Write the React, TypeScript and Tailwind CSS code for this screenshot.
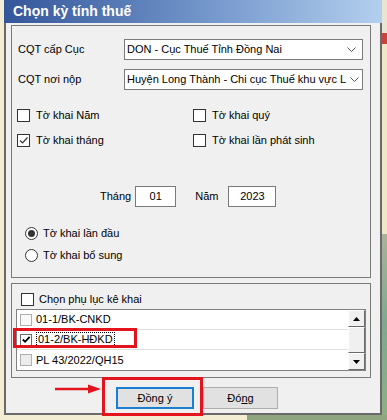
import React from 'react'

const CheckMark = ({ thick }: { thick?: boolean }) => (
  <svg width="11" height="11" viewBox="0 0 11 11">
    <polyline
      points="2,5.5 4.5,8 9.5,2.5"
      fill="none"
      stroke={thick ? '#000' : '#333'}
      strokeWidth={thick ? 2 : 1.2}
    />
  </svg>
)

const CheckBox = ({ checked }: { checked?: boolean }) => (
  <span className="w-[13px] h-[13px] border border-[#333] bg-white flex items-center justify-center shrink-0">
    {checked && <CheckMark />}
  </span>
)

const Radio = ({ checked }: { checked?: boolean }) => (
  <span className="w-[13px] h-[13px] rounded-full border border-[#333] bg-white flex items-center justify-center shrink-0">
    {checked && <span className="w-[7px] h-[7px] rounded-full bg-[#333]" />}
  </span>
)

const Combo = ({ value }: { value: string }) => (
  <div className="w-[239px] h-[21px] border border-[#7a7a7a] bg-white flex items-center pl-[2px] pr-[6px]">
    <span className="flex-1 whitespace-nowrap">{value}</span>
    <svg width="9" height="5" viewBox="0 0 9 5" className="ml-[4px] shrink-0">
      <polyline points="0.5,0.5 4.5,4.5 8.5,0.5" fill="none" stroke="#555" strokeWidth="1" />
    </svg>
  </div>
)

const ScrollButton = ({ up }: { up?: boolean }) => (
  <div className="h-[17px] bg-[#f0f0f0] border border-t-white border-l-white border-r-[#696969] border-b-[#696969] flex items-center justify-center">
    <svg width="7" height="4" viewBox="0 0 7 4">
      <polygon points={up ? '0,4 3.5,0 7,4' : '0,0 3.5,4 7,0'} fill="#000" />
    </svg>
  </div>
)

const rows = [
  { code: '01-1/BK-CNKD', checked: false, focus: false },
  { code: '01-2/BK-HĐKD', checked: true, focus: true },
  { code: 'PL 43/2022/QH15', checked: false, focus: false },
]

export default function App() {
  return (
    <div className="w-[387px] h-[420px] overflow-hidden flex flex-col bg-[#f3eed3] text-[11px] text-black font-['Liberation_Sans',Arial,sans-serif]">
      <div className="flex h-[415px]">
        <div className="w-[4px] bg-[#f3eed3]" />
        <div className="w-[378px] flex flex-col">
          <div className="h-[23px] shrink-0 flex items-center pl-[9px] bg-gradient-to-r from-[#34569a] via-[#6f92c8] to-[#b3cfee]">
            <span className="text-white font-bold text-[14px]">Chọn kỳ tính thuế</span>
          </div>
          <div className="flex-1 bg-[#f0f0f0] border-l-2 border-r-2 border-b-2 border-[#6a6a6a] flex flex-col">
            {/* group 1 */}
            <div className="mt-[2px] ml-[5px] w-[360px] h-[253px] border border-[#7a7a7a] flex flex-col pt-[13px]">
              <div className="flex items-center pl-[6px]">
                <span className="w-[106px]">CQT cấp Cục</span>
                <Combo value="DON - Cục Thuế Tỉnh Đồng Nai" />
              </div>
              <div className="flex items-center pl-[6px] mt-[9px]">
                <span className="w-[106px]">CQT nơi nộp</span>
                <Combo value="Huyện Long Thành - Chi cục Thuế khu vực L" />
              </div>

              <div className="flex items-center h-[13px] pl-[5px] mt-[19px]">
                <div className="w-[176px] flex items-center gap-[6px]">
                  <CheckBox />
                  <span>Tờ khai Năm</span>
                </div>
                <div className="flex items-center gap-[6px]">
                  <CheckBox />
                  <span>Tờ khai quý</span>
                </div>
              </div>
              <div className="flex items-center h-[13px] pl-[5px] mt-[12px]">
                <div className="w-[176px] flex items-center gap-[6px]">
                  <CheckBox checked />
                  <span>Tờ khai tháng</span>
                </div>
                <div className="flex items-center gap-[6px]">
                  <CheckBox />
                  <span>Tờ khai lần phát sinh</span>
                </div>
              </div>

              <div className="flex items-center pl-[88px] mt-[39px]">
                <span>Tháng</span>
                <div className="ml-[4px] w-[41px] h-[21px] border border-[#7a7a7a] bg-white flex items-center justify-center">
                  01
                </div>
                <span className="ml-[19px]">Năm</span>
                <div className="ml-[10px] w-[48px] h-[21px] border border-[#7a7a7a] bg-white flex items-center justify-center">
                  2023
                </div>
              </div>

              <div className="flex items-center h-[13px] pl-[13px] gap-[5px] mt-[20px]">
                <Radio checked />
                <span>Tờ khai lần đầu</span>
              </div>
              <div className="flex items-center h-[13px] pl-[13px] gap-[5px] mt-[9px]">
                <Radio />
                <span>Tờ khai bổ sung</span>
              </div>
            </div>

            {/* group 2 */}
            <div className="mt-[5px] ml-[5px] w-[360px] h-[95px] border border-[#7a7a7a] flex flex-col pt-[9px]">
              <div className="flex items-center h-[13px] pl-[9px] gap-[5px]">
                <CheckBox />
                <span>Chọn phụ lục kê khai</span>
              </div>
              <div className="relative mt-[3px] ml-[4px] w-[350px] h-[62px] border border-[#828282] bg-white flex">
                <div className="flex-1 flex flex-col">
                  {rows.map((r, i) => (
                    <div
                      key={r.code}
                      className={`h-[20px] flex items-center pl-[3px] gap-[4px] ${i < 2 ? 'border-b border-[#e0e0e0]' : ''}`}
                    >
                      <span
                        className={`w-[12px] h-[12px] border flex items-center justify-center shrink-0 ${
                          r.checked ? 'border-[#6e6e6e] bg-white' : i === 2 ? 'border-[#b0b0b0] bg-[#ececec]' : 'border-[#b0b0b0] bg-[#f8f8f8]'
                        }`}
                      >
                        {r.checked && <CheckMark thick />}
                      </span>
                      <span className={r.focus ? 'border border-dotted border-black px-[1px] leading-[13px]' : ''}>
                        {r.code}
                      </span>
                    </div>
                  ))}
                </div>
                <div className="w-[17px] flex flex-col">
                  <ScrollButton up />
                  <div className="flex-1 bg-[#f0f0f0] border border-t-white border-l-white border-r-[#696969] border-b-[#696969]" />
                  <ScrollButton />
                </div>
                <div className="absolute left-[-4px] top-[18px] w-[124px] h-[20px] border-[3px] border-[#e3141d]" />
              </div>
            </div>

            {/* buttons */}
            <div className="flex mt-[9px] pl-[110px] gap-[9px]">
              <div className="relative">
                <button className="w-[78px] h-[22px] bg-[#e1e1e1] border-2 border-[#1a7fd0] flex items-center justify-center">
                  <span>
                    Đồn<span className="underline">g</span> ý
                  </span>
                </button>
                <div className="absolute left-[-14px] top-[-10px] w-[101px] h-[39px] border-[3px] border-[#e3141d]" />
                <svg width="46" height="10" viewBox="0 0 46 10" className="absolute left-[-61px] top-[-3px]">
                  <line x1="0" y1="5" x2="36" y2="5" stroke="#e3141d" strokeWidth="2.5" />
                  <polygon points="33,0.5 46,5 33,9.5" fill="#e3141d" />
                </svg>
              </div>
              <button className="w-[75px] h-[22px] bg-[#e1e1e1] border border-[#adadad] flex items-center justify-center">
                <span>
                  Đó<span className="underline">n</span>g
                </span>
              </button>
            </div>
          </div>
        </div>
        <div className="w-[5px] flex flex-col">
          <div className="h-[33px] bg-[#e9e5d3]" />
          <div className="h-[11px] bg-[#c9443a]" />
          <div className="h-[190px] bg-[#efe8c8]" />
          <div className="flex-1 bg-gradient-to-b from-[#a9b29a] via-[#7fa88f] to-[#8fae86]" />
        </div>
      </div>
      <div className="flex flex-1">
        <div className="w-[247px] bg-[#f3eed3]" />
        <div className="flex-1 bg-[#8ea57f]" />
      </div>
    </div>
  )
}
